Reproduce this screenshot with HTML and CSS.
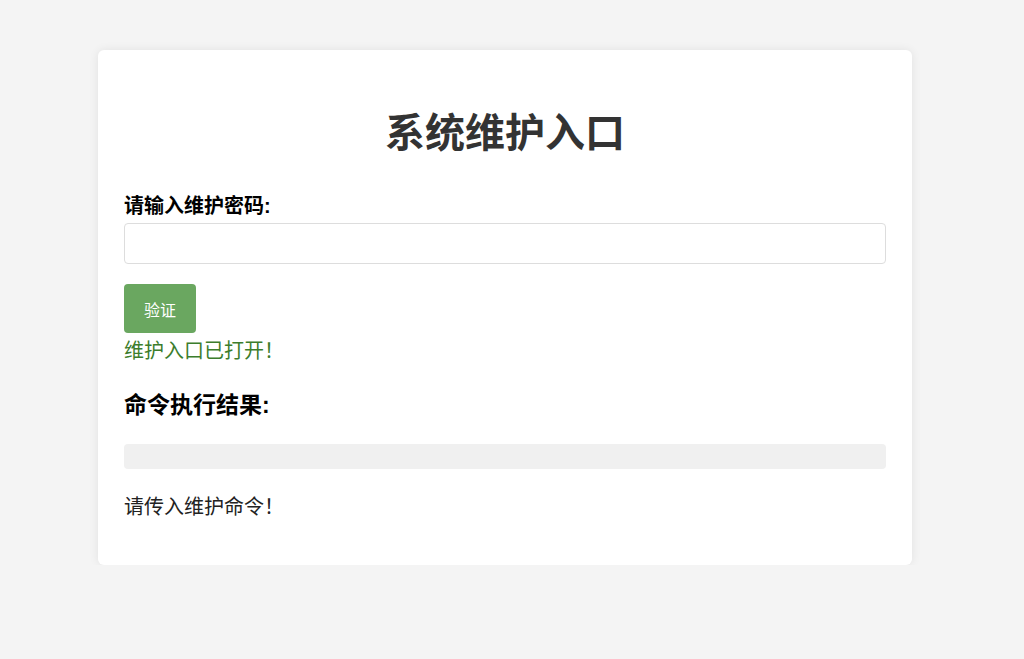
FILE: index.html
```html
<!DOCTYPE html>
<html>
	<head>
		<meta charset="utf-8">
		<title>系统维护入口</title>
		<link rel="stylesheet" href="styles.css">
	</head>
	<body>
		<main class="container">
			<h1>系统维护入口</h1>
			<form class="login">
				<label for="pwd">请输入维护密码:</label>
				<input type="password" id="pwd" name="pwd">
				<button type="submit">验证</button>
			</form>
			<p class="success">维护入口已打开！</p>
			<h3>命令执行结果:</h3>
			<pre class="output"></pre>
			<p class="hint">请传入维护命令！</p>
		</main>
	</body>
</html>
```

FILE: styles.css
```css
html, body {
	margin: 0;
	padding: 0;
	background: #f4f4f4;
	font-family: "Liberation Sans", "Noto Sans CJK SC", sans-serif;
	color: #000;
}
body {
	padding: 50px 14px 0 0;
}
.container {
	width: 814px;
	box-sizing: border-box;
	margin: 0 auto;
	padding: 61px 26px 43px;
	background: #fff;
	border-radius: 6px;
	box-shadow: 0 0 10px rgba(0, 0, 0, 0.08);
}
h1 {
	margin: 0 0 38px;
	text-align: center;
	font-size: 40px;
	line-height: 1.1;
	color: #333;
}
.login label {
	display: block;
	font-weight: bold;
	font-size: 20px;
	line-height: 26px;
	margin-bottom: 4px;
}
.login input {
	display: block;
	width: 100%;
	box-sizing: border-box;
	height: 41px;
	border: 1px solid #ddd;
	border-radius: 4px;
	margin: 0 0 20px;
	font-size: 16px;
}
.login button {
	display: block;
	border: none;
	background: #6aa760;
	color: #fff;
	font-family: inherit;
	font-size: 16px;
	width: 72px;
	height: 49px;
	border-radius: 4px;
	cursor: pointer;
}
.success {
	margin: 0;
	color: #3c7d2c;
	font-size: 20px;
	line-height: 36px;
}
h3 {
	font-size: 23px;
	margin: 21px 0 24px;
	line-height: 30px;
}
.output {
	margin: 0;
	height: 25px;
	background: #f0f0f0;
	border-radius: 4px;
}
.hint {
	margin: 23px 0 0;
	font-size: 20px;
	line-height: 30px;
	color: #222;
}
```
